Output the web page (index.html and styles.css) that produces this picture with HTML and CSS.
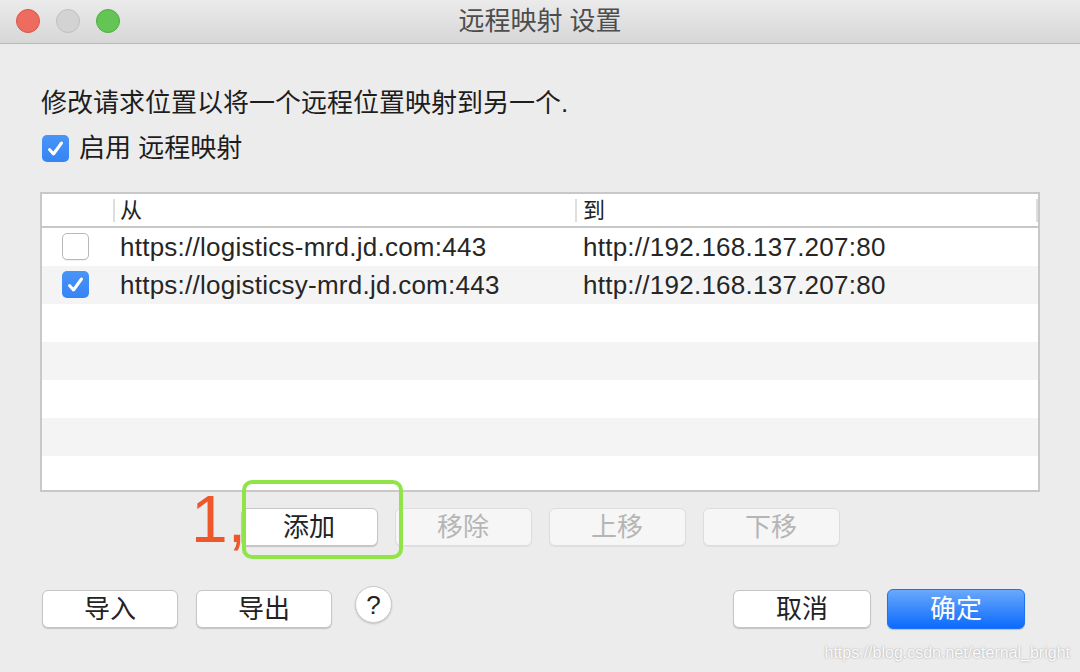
FILE: index.html
```html
<!DOCTYPE html>
<html lang="zh-CN">
<head>
<meta charset="utf-8">
<title>远程映射 设置</title>
<link rel="stylesheet" href="styles.css">
</head>
<body>
<div class="window">
  <header class="titlebar">
    <div class="lights">
      <span class="light light-close"></span>
      <span class="light light-min"></span>
      <span class="light light-max"></span>
    </div>
    <div class="title">远程映射 设置</div>
    <div></div>
  </header>

  <main class="content">
    <p class="desc">修改请求位置以将一个远程位置映射到另一个.</p>
    <label class="enable">
      <span class="cb cb-on"><svg viewBox="0 0 27 27" width="27" height="27"><path d="M7.5 14.5 L11.5 19 L19.5 8" fill="none" stroke="#fff" stroke-width="3" stroke-linecap="round" stroke-linejoin="round"/></svg></span>
      <span class="enable-label">启用 远程映射</span>
    </label>

    <div class="table">
      <div class="thead">
        <div class="th th-check"></div>
        <div class="th th-sep">从</div>
        <div class="th th-sep th-last">到</div>
      </div>
      <div class="row">
        <div class="cell cell-check"><span class="cb cb-off"></span></div>
        <div class="cell">https://logistics-mrd.jd.com:443</div>
        <div class="cell">http://192.168.137.207:80</div>
      </div>
      <div class="row">
        <div class="cell cell-check"><span class="cb cb-on"><svg viewBox="0 0 27 27" width="27" height="27"><path d="M7.5 14.5 L11.5 19 L19.5 8" fill="none" stroke="#fff" stroke-width="3" stroke-linecap="round" stroke-linejoin="round"/></svg></span></div>
        <div class="cell">https://logisticsy-mrd.jd.com:443</div>
        <div class="cell">http://192.168.137.207:80</div>
      </div>
      <div class="row"></div>
      <div class="row"></div>
      <div class="row"></div>
      <div class="row"></div>
      <div class="row"></div>
    </div>

    <div class="actions">
      <button class="btn">添加</button>
      <button class="btn btn-disabled">移除</button>
      <button class="btn btn-disabled">上移</button>
      <button class="btn btn-disabled">下移</button>
    </div>

    <div class="footer">
      <button class="btn btn-sm">导入</button>
      <button class="btn btn-sm">导出</button>
      <button class="help">?</button>
      <div class="spacer"></div>
      <button class="btn btn-wide">取消</button>
      <button class="btn btn-wide btn-primary">确定</button>
    </div>
  </main>

  <div class="annot-num">1,</div>
  <div class="annot-box"></div>
  <div class="watermark">https://blog.csdn.net/eternal_bright</div>
</div>
</body>
</html>
```

FILE: styles.css
```css
* { box-sizing: border-box; }

html, body {
  margin: 0;
  padding: 0;
}

body {
  width: 1080px;
  height: 672px;
  overflow: hidden;
  background: #ececec;
  font-family: "Liberation Sans", "Noto Sans CJK SC", sans-serif;
  color: #1f1f1f;
}

.window {
  position: relative;
  width: 1080px;
  height: 672px;
}

/* Title bar */
.titlebar {
  height: 44px;
  display: grid;
  grid-template-columns: 1fr auto 1fr;
  align-items: center;
  background: linear-gradient(#ebebeb, #d7d7d7);
  border-bottom: 1px solid #b9b9b9;
}

.lights {
  display: flex;
  gap: 16px;
  padding-left: 16px;
  padding-bottom: 1px;
}

.light {
  width: 24px;
  height: 24px;
  border-radius: 50%;
  display: block;
}

.light-close { background: #ee6b5f; border: 1px solid #d85648; }
.light-min { background: #d3d3d3; border: 1px solid #c0c0c0; }
.light-max { background: #62c554; border: 1px solid #4fae40; }

.title {
  font-size: 26px;
  line-height: 30px;
  color: #4d4d4d;
  padding-bottom: 1px;
}

/* Content */
.content {
  padding: 0 40px;
}

.desc {
  margin: 41px 0 0 1px;
  font-size: 26px;
  line-height: 36px;
  color: #1d1d1d;
}

.enable {
  display: flex;
  align-items: center;
  gap: 10px;
  height: 30px;
  margin-top: 12px;
  padding-left: 2px;
}

.enable-label {
  font-size: 26px;
  line-height: 30px;
  color: #1d1d1d;
}

.cb {
  width: 27px;
  height: 27px;
  border-radius: 5px;
  display: block;
  flex: none;
}

.cb svg { display: block; }

.cb-on {
  background: linear-gradient(#4a94f8, #3584f6);
}

.cb-off {
  background: #fff;
  border: 1px solid #b8b8b8;
  box-shadow: 0 1px 1px rgba(0, 0, 0, 0.06);
}

/* Table */
.table {
  margin-top: 29px;
  height: 300px;
  border: 2px solid #c8c8c8;
  background: #fff;
  overflow: hidden;
}

.thead {
  display: grid;
  grid-template-columns: 71px 462px 463px;
  height: 34px;
  border-bottom: 2px solid #c8c8c8;
  background: #fff;
}

.th {
  margin: 5px 0 4px;
  height: 23px;
  font-size: 22px;
  line-height: 23px;
  color: #222;
}

.th-sep {
  border-left: 2px solid #dedede;
  padding-left: 5px;
}

.th-last {
  padding-left: 6px;
  border-right: 2px solid #dedede;
}

.row {
  display: grid;
  grid-template-columns: 71px 462px 463px;
  align-items: center;
  height: 38px;
  background: #fff;
}

.row:nth-child(odd) {
  background: #f4f4f4;
}

.cell {
  padding-left: 7px;
  font-size: 26px;
  letter-spacing: 0.25px;
  line-height: 38px;
  color: #262626;
  white-space: nowrap;
}

.cell + .cell + .cell {
  padding-left: 8px;
}

.cell-check {
  padding-left: 20px;
  display: flex;
  align-items: center;
  padding-bottom: 2px;
}

/* Buttons */
.actions {
  display: flex;
  justify-content: center;
  gap: 17px;
  margin-top: 16px;
}

.btn {
  width: 137px;
  height: 38px;
  margin: 0;
  padding: 0;
  border: 1px solid #c6c6c6;
  border-radius: 6px;
  background: #fff;
  box-shadow: 0 1px 1px rgba(0, 0, 0, 0.18);
  font-family: "Liberation Sans", "Noto Sans CJK SC", sans-serif;
  font-size: 26px;
  line-height: 34px;
  color: #222;
}

.btn-disabled {
  background: #f6f6f6;
  border-color: #dddddd;
  box-shadow: 0 1px 1px rgba(0, 0, 0, 0.06);
  color: #b5b5b5;
}

.footer {
  display: flex;
  align-items: flex-start;
  margin-top: 44px;
  padding: 0 15px 0 2px;
}

.btn-sm { width: 136px; }
.btn-sm + .btn-sm { margin-left: 18px; }

.help {
  width: 37px;
  height: 37px;
  margin: -4px 0 0 23px;
  padding: 0;
  border: 1px solid #c9c9c9;
  border-radius: 50%;
  background: #fff;
  box-shadow: 0 1px 2px rgba(0, 0, 0, 0.18);
  font-family: "Liberation Sans", sans-serif;
  font-size: 26px;
  line-height: 34px;
  color: #222;
}

.spacer { flex: 1; }

.btn-wide { width: 138px; }
.btn-wide + .btn-wide { margin-left: 16px; }

.btn-primary {
  height: 40px;
  margin-top: -1px;
  border: 1px solid #1f72f0;
  background: linear-gradient(#6aa8fb, #0a6bfe);
  color: #fff;
  line-height: 36px;
}

/* Annotations (overlay) */
.annot-num {
  position: absolute;
  left: 191px;
  top: 486px;
  font-family: "Liberation Sans", sans-serif;
  font-size: 66px;
  line-height: 66px;
  color: #ef5629;
}

.annot-box {
  position: absolute;
  left: 242px;
  top: 480px;
  width: 161px;
  height: 79px;
  border: 4px solid #90e44a;
  border-radius: 10px;
}

.watermark {
  position: absolute;
  right: 10px;
  top: 643px;
  font-family: "Liberation Sans", sans-serif;
  font-size: 16px;
  line-height: 20px;
  color: #fbfbfb;
  text-shadow: 0 0 2px rgba(0, 0, 0, 0.35);
}
```
